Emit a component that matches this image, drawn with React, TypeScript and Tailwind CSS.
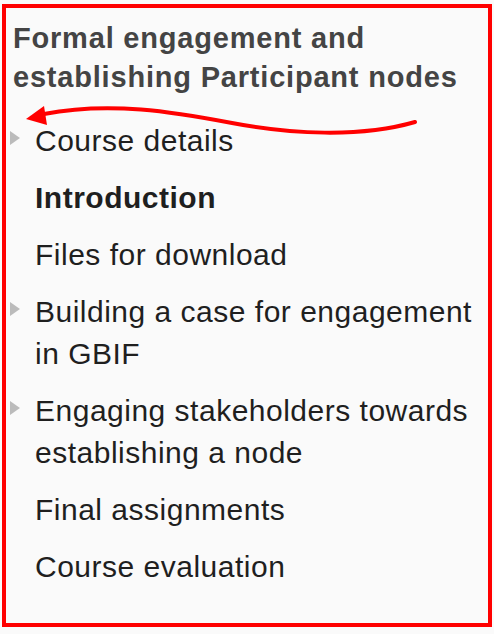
import React from "react";

type Item = { label: string; bold?: boolean; expandable?: boolean };

const items: Item[] = [
  { label: "Course details", expandable: true },
  { label: "Introduction", bold: true },
  { label: "Files for download" },
  { label: "Building a case for engagement in GBIF", expandable: true },
  { label: "Engaging stakeholders towards establishing a node", expandable: true },
  { label: "Final assignments" },
  { label: "Course evaluation" },
];

function Arrow() {
  return (
    <svg
      className="absolute left-0 top-0 pointer-events-none"
      width={494}
      height={160}
      viewBox="0 0 494 160"
    >
      <path
        d="M415 122 C 360 138 290 134 232 123 S 110 101 44 114"
        fill="none"
        stroke="#ff0000"
        strokeWidth={4}
        strokeLinecap="round"
      />
      <polygon points="26,119 44,106 47,125" fill="#ff0000" />
    </svg>
  );
}

export default function App() {
  return (
    <div
      className="relative w-[494px] h-[634px] bg-[#fafafa] pt-[4px] pl-[2px]"
      style={{ fontFamily: '"Liberation Sans", Arial, sans-serif' }}
    >
      <div className="w-[490px] h-[623px] border-4 border-[#ff0000] pt-[11px] pl-[7px] pr-[4px]">
        <h2 className="text-[29px] leading-[39px] font-bold tracking-[0.8px] text-[#444444]">
          Formal engagement and
          <br />
          establishing Participant nodes
        </h2>
        <ul className="mt-[23px] flex flex-col gap-[15px] pl-[4px] -ml-[7px]">
          {items.map((it) => (
            <li key={it.label} className="flex items-start">
              <span className="w-[10px] shrink-0 mt-[11px]">
                {it.expandable && (
                  <span className="block w-0 h-0 border-l-[10px] border-l-[#bbbbbb] border-y-[7px] border-y-transparent" />
                )}
              </span>
              <span
                className={`ml-[15px] text-[30px] leading-[42px] tracking-[0.5px] text-[#1f1f1f] ${
                  it.bold ? "font-bold" : "font-normal"
                }`}
              >
                {it.label}
              </span>
            </li>
          ))}
        </ul>
      </div>
      <Arrow />
    </div>
  );
}
